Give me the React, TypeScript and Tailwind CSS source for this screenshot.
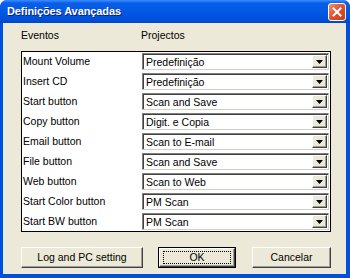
const rows = [
  { evento: 'Mount Volume', projecto: 'Predefinição' },
  { evento: 'Insert CD', projecto: 'Predefinição' },
  { evento: 'Start button', projecto: 'Scan and Save' },
  { evento: 'Copy button', projecto: 'Digit. e Copia' },
  { evento: 'Email button', projecto: 'Scan to E-mail' },
  { evento: 'File button', projecto: 'Scan and Save' },
  { evento: 'Web button', projecto: 'Scan to Web' },
  { evento: 'Start Color button', projecto: 'PM Scan' },
  { evento: 'Start BW button', projecto: 'PM Scan' },
];

function ComboBox({ value }: { value: string }) {
  return (
    <div className="flex h-[17px] w-[187px] items-stretch border border-t-[#7f7f7f] border-l-[#7f7f7f] border-b-[#d4d0c8] border-r-[#d4d0c8] bg-white shadow-[inset_1px_1px_0_#404040]">
      <span className="flex-1 truncate pl-[3px] pt-[1px] leading-[14px] text-black">{value}</span>
      <span className="my-[1px] mr-[1px] flex w-[15px] items-center justify-center border border-t-white border-l-white border-b-[#404040] border-r-[#404040] bg-[#ece9d8] shadow-[inset_-1px_-1px_0_#9d9d9d]">
        <svg width="7" height="4" viewBox="0 0 7 4">
          <path d="M0 0h7L3.5 4z" fill="#000" />
        </svg>
      </span>
    </div>
  );
}

function Button({ label, width, isDefault }: { label: string; width: string; isDefault?: boolean }) {
  return (
    <button
      type="button"
      className={`flex h-[21px] ${width} items-center justify-center ${isDefault ? 'border border-black' : ''} bg-[#ece9d8]`}
    >
      <span className="flex h-full w-full items-center justify-center border border-t-white border-l-white border-b-[#404040] border-r-[#404040] shadow-[inset_-1px_-1px_0_#9d9d9d]">
        {isDefault ? (
          <span className="flex h-[13px] w-[calc(100%-6px)] items-center justify-center border border-dotted border-black">
            {label}
          </span>
        ) : (
          label
        )}
      </span>
    </button>
  );
}

export default function App() {
  return (
    <div
      className="flex h-[278px] w-[350px] flex-col overflow-hidden rounded-t-[7px] bg-[#0050e0] text-[10.5px] text-black"
      style={{ fontFamily: '"Liberation Sans", Arial, sans-serif' }}
    >
      {/* title bar */}
      <div className="relative flex h-[23px] items-center bg-[linear-gradient(to_bottom,#3d8fff_0px,#0a5fe8_3px,#0058e6_12px,#004ed8_20px,#0047cc_23px)] pl-[7px]">
        <span className="text-[11px] font-bold tracking-[-0.1px] text-white [text-shadow:1px_1px_0_#0a1f6e]">
          Definições Avançadas
        </span>
        <div className="absolute right-[4px] top-[3px] flex h-[18px] w-[18px] items-center justify-center rounded-[3px] border border-white bg-[linear-gradient(135deg,#f0926e,#e0502a_50%,#c73c14)]">
          <svg width="10" height="10" viewBox="0 0 10 10">
            <path d="M1.5 1.5l7 7M8.5 1.5l-7 7" stroke="#fff" strokeWidth="2" strokeLinecap="square" />
          </svg>
        </div>
      </div>

      {/* body */}
      <div className="mx-[3px] mb-[4px] mr-[4px] flex flex-1 flex-col bg-[#ece9d8] pl-[18px] pr-[15px]">
        <div className="flex h-[28px] items-center pb-[2px]">
          <span className="w-[120px]">Eventos</span>
          <span>Projectos</span>
        </div>

        <div className="flex flex-col gap-[3px] border border-black bg-white py-[1px] pr-[1px]">
          {rows.map((r) => (
            <div key={r.evento} className="flex h-[17px] items-center">
              <span className="w-[120px] pl-[1px]">{r.evento}</span>
              <ComboBox value={r.projecto} />
            </div>
          ))}
        </div>

        <div className="mt-[15px] flex items-center">
          <Button label="Log and PC setting" width="w-[122px]" />
          <div className="ml-[15px]">
            <Button label="OK" width="w-[78px]" isDefault />
          </div>
          <div className="ml-[16px]">
            <Button label="Cancelar" width="w-[79px]" />
          </div>
        </div>
      </div>
    </div>
  );
}
